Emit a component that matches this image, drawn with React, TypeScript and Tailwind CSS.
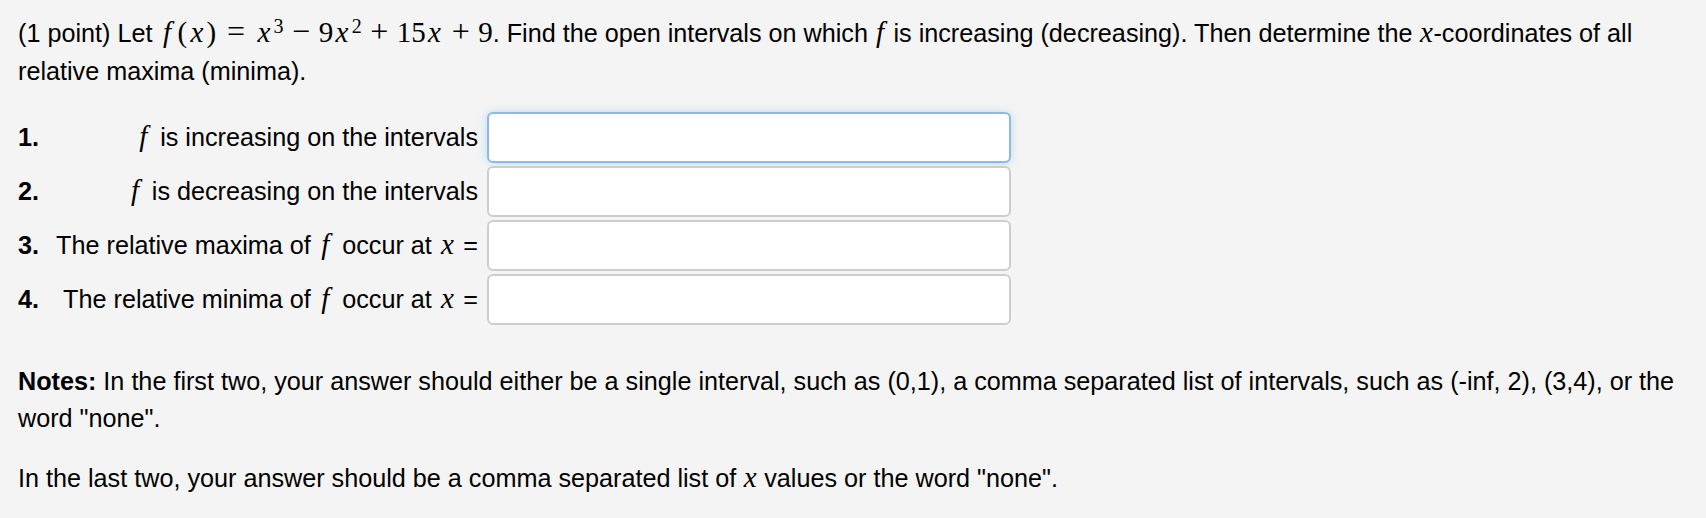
import React from 'react'

const sans = { fontFamily: 'Helvetica, "Liberation Sans", Arial, sans-serif' }

// math pieces, padded out to roughly the widths MathJax gives them
const serif = "font-['Liberation_Serif',serif] text-[29px] leading-none"
const opSerif = "font-['Liberation_Serif',serif] text-[32px] leading-none"

function F({ tight }: { tight?: boolean }) {
  return <span className={tight ? serif + ' italic pl-[0.04em] pr-[0.08em]' : serif + ' italic pl-[0.12em] pr-[0.2em]'}>f</span>
}

function X({ tight }: { tight?: boolean }) {
  return <span className={tight ? serif + ' italic px-[0.02em]' : serif + ' italic px-[0.08em]'}>x</span>
}

function N({ children }: { children: React.ReactNode }) {
  return <span className={serif}>{children}</span>
}

function P({ children }: { children: React.ReactNode }) {
  return <span className={serif + ' px-[0.03em]'}>{children}</span>
}

function Op({ children, rel }: { children: React.ReactNode; rel?: boolean }) {
  return <span className={rel ? opSerif + ' mx-[10px]' : opSerif + ' mx-[8.5px]'}>{children}</span>
}

function Sup({ children }: { children: React.ReactNode }) {
  return <sup className="font-['Liberation_Serif',serif] text-[20px] top-[-0.45em] pl-[0.05em]">{children}</sup>
}

const rows: { n: string; label: React.ReactNode; focus?: boolean }[] = [
  { n: '1.', label: <><F /> is increasing on the intervals</>, focus: true },
  { n: '2.', label: <><F /> is decreasing on the intervals</> },
  { n: '3.', label: <>The relative maxima of <F /> occur at <X /> =</> },
  { n: '4.', label: <>The relative minima of <F /> occur at <X /> =</> },
]

export default function App() {
  return (
    <div className="min-h-[518px] bg-[#f4f4f4] text-black text-[25.2px] pl-[18px] pr-[16px] pt-[14px]" style={sans}>
      <p className="leading-[38px]">
        (1 point) Let <F /><P>(</P><X /><P>)</P><Op rel>=</Op><X /><Sup>3</Sup>
        <Op>−</Op><N>9</N><X /><Sup>2</Sup><Op>+</Op><N>15</N><X /><Op>+</Op><N>9</N>. Find the open
        intervals on which <F tight /> is increasing (decreasing). Then determine the <X tight />-coordinates of all relative maxima (minima).
      </p>

      <div className="mt-[22px] grid grid-cols-[37px_432px_524px] gap-y-[3px]">
        {rows.map((r) => (
          <React.Fragment key={r.n}>
            <div className="font-bold flex items-center h-[51px]">{r.n}</div>
            <div className="flex items-center justify-end h-[51px] pr-[9px] whitespace-nowrap">
              <span>{r.label}</span>
            </div>
            <input
              type="text"
              className={
                r.focus
                  ? 'h-[51px] bg-white rounded-[6px] border-2 border-[#8ab9ec] shadow-[0_0_9px_rgba(82,168,236,0.35)] outline-none'
                  : 'h-[51px] bg-white rounded-[6px] border-2 border-[#cdcdcd] outline-none'
              }
            />
          </React.Fragment>
        ))}
      </div>

      <p className="mt-[38px] leading-[37px]">
        <b>Notes:</b> In the first two, your answer should either be a single interval, such as (0,1), a comma separated list of
        intervals, such as (-inf, 2), (3,4), or the word "none".
      </p>
      <p className="mt-[23px] leading-[37px]">
        In the last two, your answer should be a comma separated list of <X tight /> values or the word "none".
      </p>
    </div>
  )
}
